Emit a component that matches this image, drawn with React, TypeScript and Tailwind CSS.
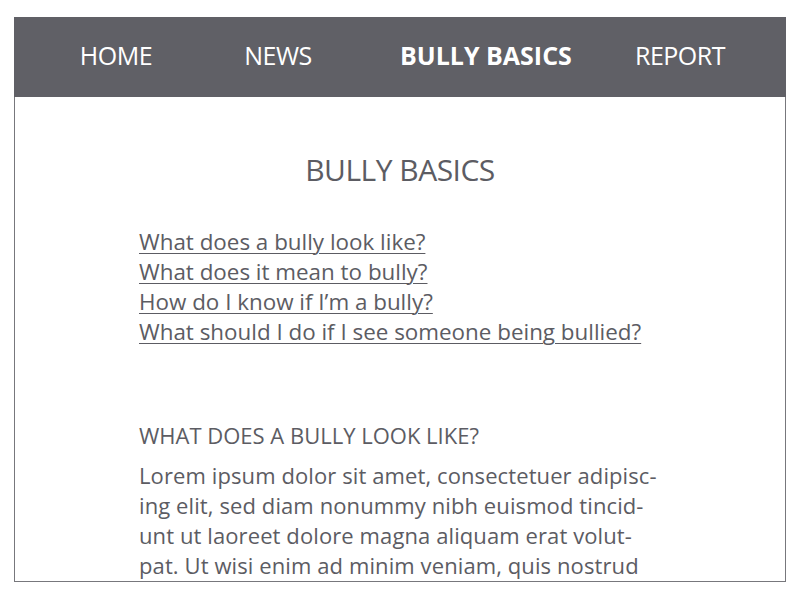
const links = [
  "What does a bully look like?",
  "What does it mean to bully?",
  "How do I know if I’m a bully?",
  "What should I do if I see someone being bullied?",
];

export default function App() {
  return (
    <div
      className="w-[800px] h-[600px] bg-white pt-[17px] px-[14px] overflow-hidden"
      style={{ fontFamily: '"Open Sans", "Noto Sans", sans-serif' }}
    >
      <div className="h-[565px] border-x border-b border-[#77777c] flex flex-col">
        <nav className="h-[80px] shrink-0 -mx-px pb-[3px] bg-[#606066] flex items-center text-white text-[25px] tracking-[-0.5px]">
          <a className="w-[160px] text-center ml-[22px]">HOME</a>
          <a className="w-[160px] text-center ml-[2px]">NEWS</a>
          <a className="w-[160px] text-center ml-[42px] font-bold whitespace-nowrap tracking-normal">BULLY BASICS</a>
          <a className="w-[160px] text-center ml-[40px]">REPORT</a>
        </nav>
        <main className="flex-1 text-[#5c5c63]">
          <h1 className="text-center text-[30px] mt-[50px] tracking-[-0.5px]">BULLY BASICS</h1>
          <ul className="pl-[124px] mt-[35px] text-[22.4px] leading-[30px]">
            {links.map((l) => (
              <li key={l}>
                <a className="underline underline-offset-[3px] decoration-1">{l}</a>
              </li>
            ))}
          </ul>
          <div className="pl-[124px] mt-[72px] w-[680px]">
            <h2 className="text-[22px]">WHAT DOES A BULLY LOOK LIKE?</h2>
            <p className="mt-[8px] text-[22px] leading-[30px] tracking-[0.1px]">
              Lorem ipsum dolor sit amet, consectetuer adipisc-
              <br />
              ing elit, sed diam nonummy nibh euismod tincid-
              <br />
              unt ut laoreet dolore magna aliquam erat volut-
              <br />
              pat. Ut wisi enim ad minim veniam, quis nostrud
            </p>
          </div>
        </main>
      </div>
    </div>
  );
}
